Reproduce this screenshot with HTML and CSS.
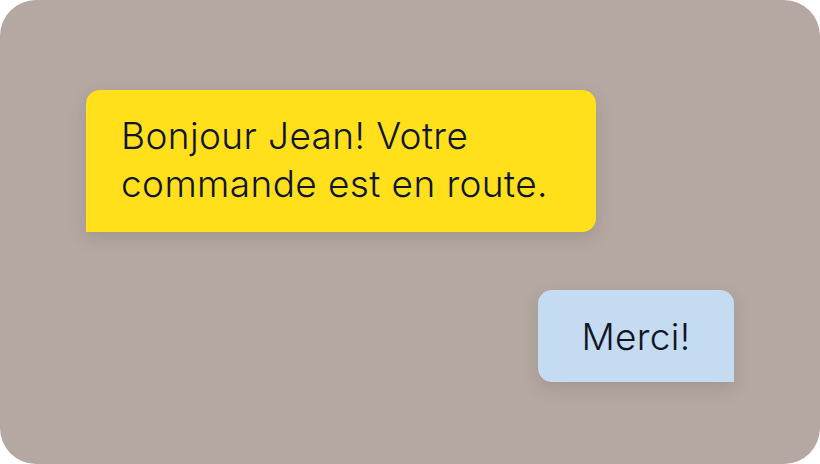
FILE: index.html
```html
<!DOCTYPE html>
<html lang="fr">
<head>
<meta charset="utf-8">
<link rel="stylesheet" href="styles.css">
</head>
<body>
<div class="canvas">
  <div class="bubble bubble-in">Bonjour Jean! Votre commande est en route.</div>
  <div class="bubble bubble-out">Merci!</div>
</div>
</body>
</html>
```
FILE: styles.css
```css
html, body {
  margin: 0;
  padding: 0;
  background: #ffffff;
}
.canvas {
  width: 820px;
  height: 464px;
  box-sizing: border-box;
  border-radius: 36px;
  background: #b5a8a2;
  padding: 90px 86px 0;
  display: flex;
  flex-direction: column;
  gap: 58px;
  font-family: Inter, "Liberation Sans", sans-serif;
  font-weight: 350;
  color: #0e1533;
}
.bubble {
  flex-shrink: 0;
  box-shadow: 0 6px 18px rgba(60, 40, 30, 0.14);
}
.bubble-in {
  align-self: flex-start;
  width: 510px;
  height: 142px;
  box-sizing: border-box;
  padding: 22px 35px;
  background: #ffe01b;
  border-radius: 14px 14px 14px 0;
  font-size: 37px;
  letter-spacing: 0.4px;
  line-height: 48px;
}
.bubble-out {
  align-self: flex-end;
  width: 196px;
  height: 92px;
  box-sizing: border-box;
  background: #c5dbf2;
  border-radius: 14px 14px 0 14px;
  display: flex;
  align-items: center;
  justify-content: center;
  font-size: 37px;
  letter-spacing: 0.3px;
  color: #12151f;
}
```
